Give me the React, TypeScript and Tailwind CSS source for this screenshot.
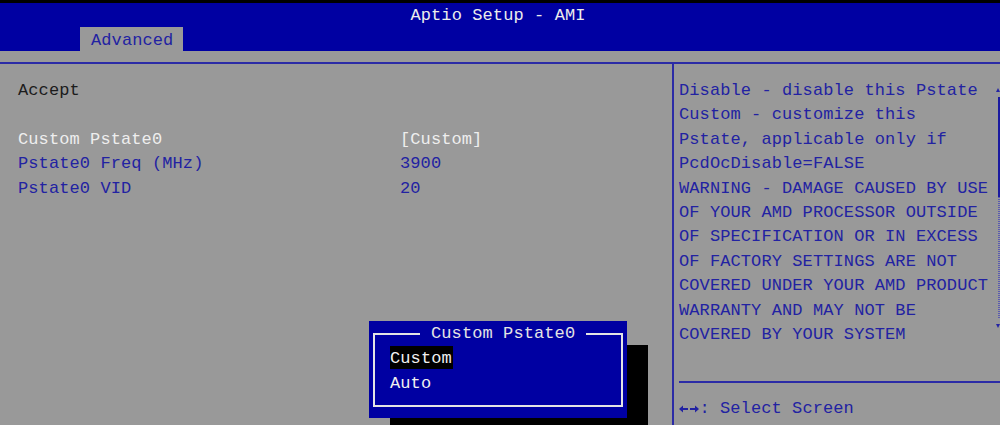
import React from "react";

const BLUE_TXT = "text-[#2222a2]";

function LRArrows() {
  return (
    <svg width="20" height="24" viewBox="0 0 20 24" className="shrink-0">
      <g fill="#2222a2">
        <polygon points="0,12 4,8.5 4,15.5" />
        <rect x="3" y="11" width="6" height="2" />
        <polygon points="20,12 16,8.5 16,15.5" />
        <rect x="11" y="11" width="6" height="2" />
      </g>
    </svg>
  );
}

function UDArrows() {
  return (
    <svg width="20" height="24" viewBox="0 0 20 24" className="shrink-0">
      <g fill="#2222a2">
        <polygon points="5,5 1.5,9 8.5,9" />
        <rect x="4" y="8" width="2" height="11" />
        <polygon points="15,19 11.5,15 18.5,15" />
        <rect x="14" y="5" width="2" height="11" />
      </g>
    </svg>
  );
}

export default function App() {
  const help = [
    "Disable - disable this Pstate",
    "Custom - customize this",
    "Pstate, applicable only if",
    "PcdOcDisable=FALSE",
    "WARNING - DAMAGE CAUSED BY USE",
    "OF YOUR AMD PROCESSOR OUTSIDE",
    "OF SPECIFICATION OR IN EXCESS",
    "OF FACTORY SETTINGS ARE NOT",
    "COVERED UNDER YOUR AMD PRODUCT",
    "WARRANTY AND MAY NOT BE",
    "COVERED BY YOUR SYSTEM",
  ];
  return (
    <div className="relative w-[1000px] h-[425px] overflow-hidden bg-[#999999] font-['Liberation_Mono',monospace] text-[17px] leading-[24.4px] tracking-[0.1px]">
      {/* top black strip */}
      <div className="h-[3px] bg-black" />
      {/* header */}
      <div className="h-[48px] bg-[#0000a2] flex flex-col">
        <div className="h-[24px] pt-[3px] flex items-center justify-center text-[#ececec]">
          <span className="mr-[4px]">Aptio Setup - AMI</span>
        </div>
        <div className="flex-1 flex items-end pl-[80px]">
          <div className={`h-[24px] w-[103px] bg-[#999999] pl-[11px] leading-[28px] ${BLUE_TXT}`}>
            Advanced
          </div>
        </div>
      </div>
      {/* gray strip + line */}
      <div className="h-[11px]" />
      <div className="h-[2px] bg-[#2b2ba6]" />
      {/* main */}
      <div className="flex h-[361px]">
        <div className="w-[672px] pl-[18px] pt-[15px]">
          <div className="text-[#1c1c1c]">Accept</div>
          <div className="h-[24.4px]" />
          <div className="grid grid-cols-[382px_auto]">
            <div className="text-[#eeeeee]">Custom Pstate0</div>
            <div className="text-[#eeeeee]">[Custom]</div>
            <div className={BLUE_TXT}>Pstate0 Freq (MHz)</div>
            <div className={BLUE_TXT}>3900</div>
            <div className={BLUE_TXT}>Pstate0 VID</div>
            <div className={BLUE_TXT}>20</div>
          </div>
        </div>
        <div className="w-[2px] bg-[#2b2ba6]" />
        <div className="relative flex-1 pl-[5px] pt-[15px]">
          <div className={BLUE_TXT}>
            {help.map((l) => (
              <div key={l} className="whitespace-pre">{l}</div>
            ))}
          </div>
          <div className="mt-[34px] h-[1.5px] bg-[#2b2ba6]" />
          <div className={`mt-[14px] ${BLUE_TXT} whitespace-pre`}>
            <div className="flex items-start">
              <LRArrows />
              <span className="pl-[0.4px]">: Select Screen</span>
            </div>
            <div className="flex items-start">
              <UDArrows />
              <span className="pl-[0.4px]">: Select Item</span>
            </div>
          </div>
          {/* scrollbar */}
          <div className="absolute right-0 top-[24px] w-[4px] flex flex-col items-end">
            <div className="w-0 h-0 border-l-[2px] border-r-[2px] border-b-[4px] border-l-transparent border-r-transparent border-b-[#2424a4]" />
            <div className="mt-[5px] w-[2px] h-[100px] bg-[#1a1aa0]" />
            <div className="w-[2px] h-[121px] bg-[repeating-linear-gradient(to_bottom,#5a5ab0_0px,#5a5ab0_1px,#999999_1px,#999999_2px)]" />
            <div className="mt-[6px] w-0 h-0 border-l-[2px] border-r-[2px] border-t-[4px] border-l-transparent border-r-transparent border-t-[#2424a4]" />
          </div>
        </div>
      </div>

      {/* popup shadow */}
      <div className="absolute left-[390px] top-[345px] w-[258px] h-[80px] bg-black" />
      {/* popup */}
      <div className="absolute left-[369px] top-[321px] w-[258px] h-[97px] bg-[#0000a2]">
        <div className="absolute left-[4px] top-[12px] right-[4px] bottom-[11px] border-2 border-[#e4e4e4]" />
        <div className="absolute left-[51px] top-[1px] h-[24px] px-[11px] bg-[#0000a2] text-[#e4e4e4] leading-[24px]">
          Custom Pstate0
        </div>
        <div className="absolute left-[21px] top-[25px] text-[#f0f0f0] leading-[23px]">
          <div className="bg-black h-[23px] pr-[1px] leading-[25px]">Custom</div>
          <div className="mt-[1.5px] leading-[25px]">Auto</div>
        </div>
      </div>
    </div>
  );
}
